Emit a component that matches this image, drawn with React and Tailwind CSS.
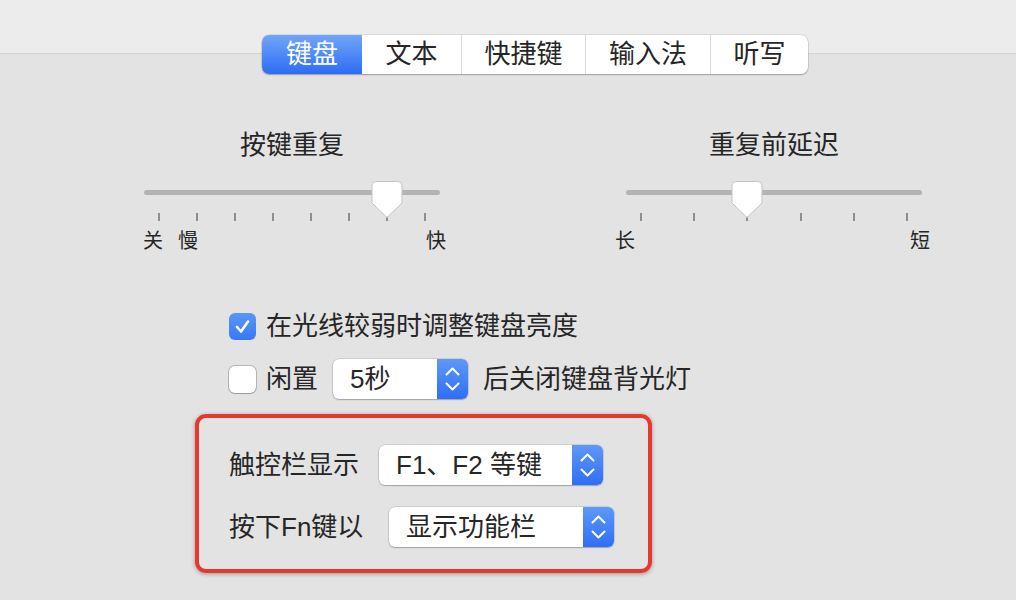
import React from 'react';

const font = { fontFamily: '"Liberation Sans", "Noto Sans CJK SC", sans-serif' };

const tabs = [
  { label: '键盘', w: 'w-[100px]', active: true },
  { label: '文本', w: 'w-[99px]' },
  { label: '快捷键', w: 'w-[124px]' },
  { label: '输入法', w: 'w-[125px]' },
  { label: '听写', w: 'w-[98px]' },
];

const Thumb = () => (
  <svg width="33" height="40" viewBox="0 0 33 40">
    <path
      d="M5.5 1.5 H27.5 Q31.5 1.5 31.5 5.5 V23 L16.5 37.5 L1.5 23 V5.5 Q1.5 1.5 5.5 1.5 Z"
      fill="#ffffff"
      stroke="#c4c4c4"
      strokeWidth="1"
    />
  </svg>
);

const Stepper = () => (
  <div className="w-[31px] h-full rounded-r-[6px] bg-gradient-to-b from-[#5e98f8] to-[#2f6ef5] flex items-center justify-center">
    <svg width="31" height="40" viewBox="0 0 31 40">
      <path d="M9.5 15.5 L15.5 9.5 L21.5 15.5" fill="none" stroke="#fff" strokeWidth="2" strokeLinecap="round" strokeLinejoin="round" />
      <path d="M9.5 24.5 L15.5 30.5 L21.5 24.5" fill="none" stroke="#fff" strokeWidth="2" strokeLinecap="round" strokeLinejoin="round" />
    </svg>
  </div>
);

const Select = ({ value, w }) => (
  <div className={`${w} h-[40px] flex bg-white rounded-[6px] shadow-[0_0_0_0.5px_rgba(0,0,0,0.18),0_1px_1.5px_rgba(0,0,0,0.22)]`}>
    <div className="flex-1 flex items-center pl-[17px] text-[26px] text-[#262626]">{value}</div>
    <Stepper />
  </div>
);

const Slider = ({ title, ticks, pos, labels }) => (
  <div className="w-[296px] flex flex-col">
    <div className="text-center text-[26px] leading-[32px] text-[#262626]">{title}</div>
    <div className="relative mt-[17px] flex flex-col">
      <div className="mt-[12px] h-[5px] rounded-full bg-[#b3b3b3]" />
      <div className="mt-[18px] h-[8px] px-[14px] flex justify-between">
        {Array.from({ length: ticks }).map((_, i) => (
          <div key={i} className="w-[2px] h-[8px] bg-[#8e8e8e]" />
        ))}
      </div>
      <div className="absolute top-[2px] -translate-x-1/2" style={{ left: `${pos}px` }}>
        <Thumb />
      </div>
    </div>
    <div className="mt-[8px] h-[24px] flex text-[20px] leading-[24px] text-[#262626]">{labels}</div>
  </div>
);

const App = () => {
  return (
    <div className="w-[1016px] h-[600px] bg-[#e3e3e3] overflow-hidden" style={font}>
      {/* toolbar strip */}
      <div className="h-[54px] bg-[#ececec] border-b border-[#d3d3d3]" />

      {/* segmented tabs */}
      <div className="-mt-[19px] ml-[262px] w-[546px] h-[39px] flex bg-white rounded-[7px] shadow-[0_0_0_0.5px_rgba(0,0,0,0.15),0_1px_1.5px_rgba(0,0,0,0.25)]">
        {tabs.map((t, i) => (
          <div
            key={t.label}
            className={`${t.w} h-full flex items-center justify-center text-[26px] ${
              t.active
                ? 'bg-gradient-to-b from-[#71a5f9] to-[#2d6cf5] text-white rounded-l-[7px]'
                : 'text-[#262626]'
            } ${i > 1 ? 'border-l border-[#dadada]' : ''} ${i === tabs.length - 1 ? 'rounded-r-[7px]' : ''}`}
          >
            {t.label}
          </div>
        ))}
      </div>

      {/* sliders */}
      <div className="mt-[55px] ml-[144px] flex gap-[186px]">
        <Slider
          title="按键重复"
          ticks={8}
          pos={243}
          labels={
            <>
              <span className="-ml-[1px]">关</span>
              <span className="ml-[15px]">慢</span>
              <span className="ml-auto -mr-[6px]">快</span>
            </>
          }
        />
        <Slider
          title="重复前延迟"
          ticks={6}
          pos={121}
          labels={
            <>
              <span className="-ml-[11px]">长</span>
              <span className="ml-auto -mr-[8px]">短</span>
            </>
          }
        />
      </div>

      {/* checkboxes */}
      <div className="mt-[53px] ml-[229px] flex flex-col gap-[13px] text-[26px] text-[#262626]">
        <div className="h-[40px] flex items-center">
          <div className="w-[27px] h-[27px] rounded-[6px] bg-gradient-to-b from-[#5a95f7] to-[#3779f4] flex items-center justify-center">
            <svg width="17" height="17" viewBox="0 0 17 17">
              <path d="M3 9 L7 13.5 L14 3.5" fill="none" stroke="#fff" strokeWidth="2.6" strokeLinecap="round" strokeLinejoin="round" />
            </svg>
          </div>
          <span className="ml-[10px]">在光线较弱时调整键盘亮度</span>
        </div>
        <div className="h-[40px] flex items-center">
          <div className="w-[27px] h-[27px] rounded-[6px] bg-white shadow-[0_0_0_1px_rgba(0,0,0,0.2),0_1px_1px_rgba(0,0,0,0.15)]" />
          <span className="ml-[10px] w-[67px]">闲置</span>
          <Select value="5秒" w="w-[135px]" />
          <span className="ml-[15px]">后关闭键盘背光灯</span>
        </div>
      </div>

      {/* highlighted box */}
      <div className="mt-[15px] ml-[195px] w-[457px] h-[159px] border-4 border-[#e6392d] rounded-[11px] shadow-[0_1px_4px_rgba(0,0,0,0.35)] pt-[27px] pl-[30px] flex flex-col gap-[22px] text-[26px] text-[#262626]">
        <div className="h-[40px] flex items-center">
          <span className="w-[150px]">触控栏显示</span>
          <Select value="F1、F2 等键" w="w-[224px]" />
        </div>
        <div className="h-[40px] flex items-center">
          <span className="w-[160px]">按下Fn键以</span>
          <Select value="显示功能栏" w="w-[225px]" />
        </div>
      </div>
    </div>
  );
};

export default App;
